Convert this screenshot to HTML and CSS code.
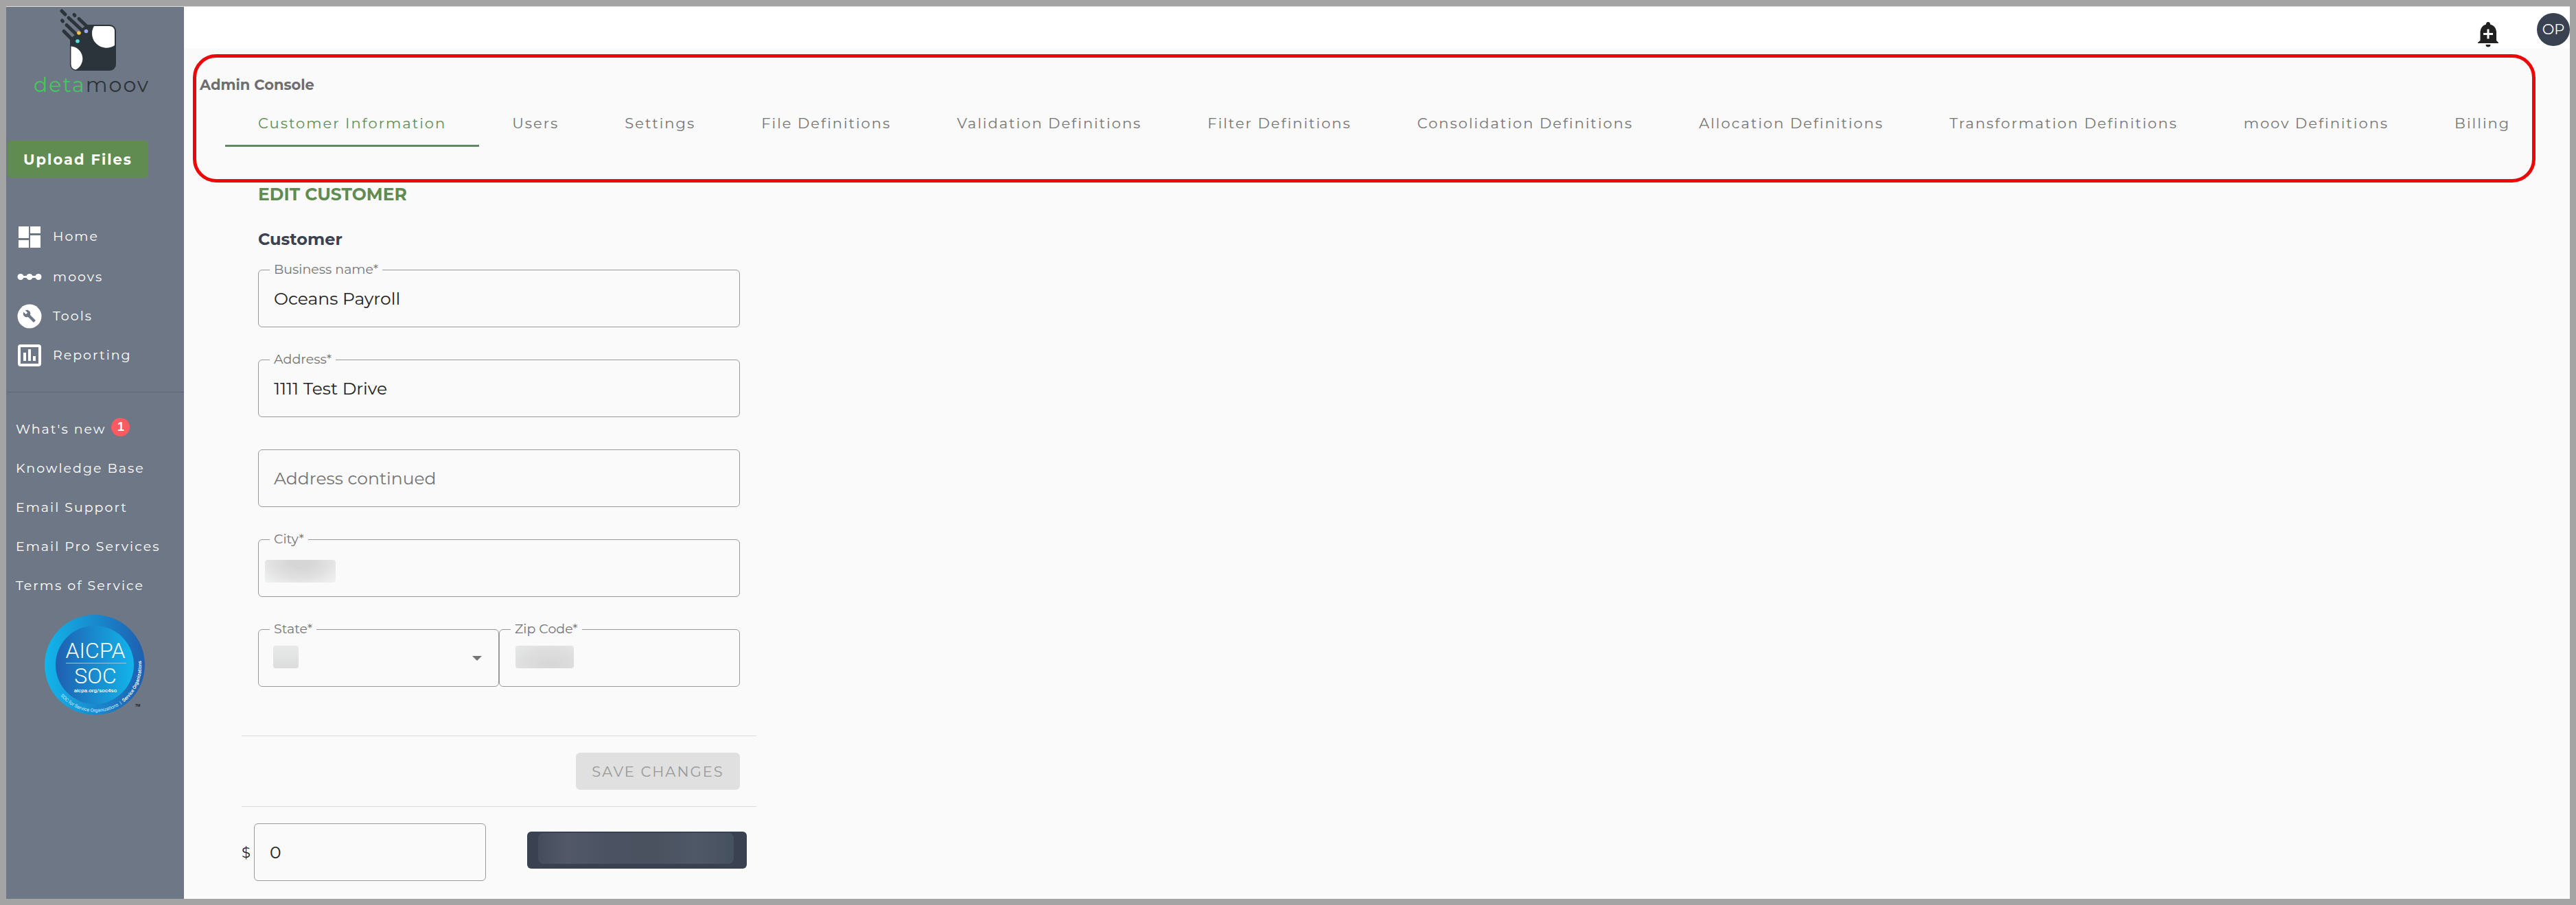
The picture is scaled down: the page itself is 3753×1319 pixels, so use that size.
FILE: index.html
```
<!DOCTYPE html>
<html lang="en">

<head>
    <meta charset="UTF-8">
    <meta name="viewport" content="width=device-width, initial-scale=1.0">
    <title>Admin Console</title>
    <link rel="stylesheet" href="styles.css">
</head>

<body>
    <div class="app">
        <aside class="sidebar">
            <svg class="logo" viewBox="0 0 180 126" width="180" height="126">
                <g stroke="#2c343b" stroke-width="5" stroke-linecap="round">
                    <path d="M44 4l5 5M44.500 18l1 1M62 9.500l1 1M54 14l27 25M69 15.500l18 17M51 24.500l24 23M47 33.500l22 22" />
                </g>
                <path d="M80 24h34a9 9 0 0 1 9 9v49a9 9 0 0 1-9 9H65a9 9 0 0 1-9-9V45z" fill="#2c343b" />
                <path d="M91 26h22q8 0 8 8v20A21 21 0 0 1 91 26z" fill="#fff" />
                <path d="M57.500 55.500a18 18 0 0 1 7 34q-7-1-7-8z" fill="#fff" />
                <circle cx="69" cy="36" r="2.800" fill="#f9c344" />
                <circle cx="79.500" cy="33.500" r="2.800" fill="#9ba6f5" />
                <circle cx="67" cy="48" r="2.800" fill="#4fe3df" />
                <text class="logo-text" x="3" y="122" fill="#41c95c">deta<tspan fill="#2c343b">moov</tspan></text>
            </svg>

            <button class="upload" type="button">Upload Files</button>

            <nav class="menu">
                <a href="#">
                    <svg viewBox="0 0 36 36"><path d="M2 3h15v17H2zM19 3h15v10H19zM2 23h15v11H2zM19 16h15v18H19z" /></svg>
                    Home
                </a>
                <a href="#">
                    <svg viewBox="0 0 36 36"><path d="M5 16h26v3H5z" /><circle cx="5" cy="17.500" r="4.500" /><circle cx="18" cy="17.500" r="4.500" /><circle cx="31" cy="17.500" r="4.500" /></svg>
                    moovs
                </a>
                <a href="#">
                    <svg viewBox="0 0 36 36"><circle cx="18" cy="18" r="17.500" /><path d="M26.500 23.500l-7.500-7.500c.8-2 .3-4.200-1.200-5.700-1.600-1.600-4-2-6-1l3.400 3.400-2.400 2.400-3.500-3.400c-1 2-.6 4.400 1 6 1.500 1.500 3.800 2 5.700 1.200l7.500 7.500c.3.300.8.300 1.100 0l1.900-1.900c.4-.3.400-.8 0-1z" fill="#6e7785" /></svg>
                    Tools
                </a>
                <a href="#">
                    <svg viewBox="0 0 36 36"><rect x="3" y="4" width="30" height="28" rx="2" fill="none" stroke="#fff" stroke-width="4" /><path d="M9 14h4v12H9zM16 9h4v17h-4zM23 19h4v7h-4z" /></svg>
                    Reporting
                </a>
            </nav>

            <nav class="links">
                <a href="#">What's new <span class="badge">1</span></a>
                <a href="#">Knowledge Base</a>
                <a href="#">Email Support</a>
                <a href="#">Email Pro Services</a>
                <a href="#">Terms of Service</a>
            </nav>

            <svg class="seal" viewBox="0 0 150 150" width="150" height="150">
                <defs>
                    <linearGradient id="ring">
                        <stop offset="0" stop-color="#12b5ea" />
                        <stop offset="1" stop-color="#1f5fb0" />
                    </linearGradient>
                    <linearGradient id="disc">
                        <stop offset="0" stop-color="#1f5fb0" />
                        <stop offset="1" stop-color="#12b5ea" />
                    </linearGradient>
                    <path id="curve" d="M24 120a67 67 0 0 0 113-69" />
                </defs>
                <circle cx="74" cy="75" r="73" fill="url(#ring)" />
                <circle cx="74" cy="75" r="57" fill="url(#disc)" />
                <g fill="#fff" text-anchor="middle">
                    <text x="75" y="65" font-size="32" font-weight="300">AICPA</text>
                    <text x="75" y="102" font-size="32" font-weight="300">SOC</text>
                    <text x="75" y="115" font-size="8" font-weight="500">aicpa.org/soc4so</text>
                </g>
                <path d="M32 72.500h88" stroke="#8fc8ee" />
                <text font-size="7" fill="#d5ecfa"><textPath href="#curve">SOC for Service Organizations &#160;| &#160;<tspan fill="#fff" font-weight="500">Service Organizations</tspan></textPath></text>
                <text x="133" y="136" font-size="5" font-weight="700" fill="#222">TM</text>
            </svg>
        </aside>

        <div class="page">
            <header class="topbar">
                <button class="bell" type="button">
                    <svg viewBox="0 0 32 38" width="32" height="38"><path d="M16 1a3 3 0 0 0-3 3.500A12 12 0 0 0 4.500 15v13L1 31v1h30v-1l-3-3V15A12 12 0 0 0 19 4.500 3 3 0 0 0 16 1zM12.500 34a3.500 3.500 0 0 0 7 0z" fill="#212121" /><path d="M16 11.500v14M9 18.500h14" stroke="#fff" stroke-width="3" /></svg>
                </button>
                <span class="avatar">OP</span>
            </header>

            <section class="console">
                <h1>Admin Console</h1>
                <nav class="tabs">
                    <a class="active" href="#">Customer Information</a>
                    <a href="#">Users</a>
                    <a href="#">Settings</a>
                    <a href="#">File Definitions</a>
                    <a href="#">Validation Definitions</a>
                    <a href="#">Filter Definitions</a>
                    <a href="#">Consolidation Definitions</a>
                    <a href="#">Allocation Definitions</a>
                    <a href="#">Transformation Definitions</a>
                    <a href="#">moov Definitions</a>
                    <a href="#">Billing</a>
                </nav>
            </section>

            <main class="content">
                <form class="customer">
                    <h2>EDIT CUSTOMER</h2>
                    <h3>Customer</h3>
                    <div class="field">
                        <input id="business" type="text" value="Oceans Payroll">
                        <label for="business">Business name*</label>
                    </div>
                    <div class="field">
                        <input id="address" type="text" value="1111 Test Drive">
                        <label for="address">Address*</label>
                    </div>
                    <div class="field">
                        <input id="address2" type="text" placeholder="Address continued">
                    </div>
                    <div class="field">
                        <input id="city" type="text">
                        <label for="city">City*</label>
                        <span class="mask mask-city"></span>
                    </div>
                    <div class="row">
                        <div class="field">
                            <select id="state"></select>
                            <label for="state">State*</label>
                            <span class="mask mask-state"></span>
                            <span class="arrow"></span>
                        </div>
                        <div class="field">
                            <input id="zip" type="text">
                            <label for="zip">Zip Code*</label>
                            <span class="mask mask-zip"></span>
                        </div>
                    </div>
                </form>

                <div class="actions">
                    <button class="save" type="button" disabled>SAVE CHANGES</button>
                </div>

                <div class="amount">
                    <label for="amount">$</label>
                    <input id="amount" type="text" value="0">
                    <button class="apply" type="button"><span></span></button>
                </div>
            </main>
        </div>
    </div>
</body>

</html>
```

FILE: styles.css
```
* {
    box-sizing: border-box;
}

body {
    margin: 0;
    background-color: #fafafa;
    font-family: Montserrat, Inter, sans-serif;
    font-size: 21px;
    color: #222;
}

a {
    color: inherit;
    text-decoration: none;
}

button,
input,
select {
    font-family: inherit;
    margin: 0;
}

.app {
    display: flex;
    min-height: 100vh;
    border: 9px solid #a4a4a4;
}

/* sidebar */
.sidebar {
    width: 259px;
    flex-shrink: 0;
    border-top: 1px solid #ddd;
    background-color: #6e7785;
    color: #fff;
    font-size: 19px;
    letter-spacing: 2px;
}

.logo {
    display: block;
    margin: 2px 0 0 37px;
    overflow: visible;
}

.logo-text {
    font-size: 30px;
    letter-spacing: 2px;
}

.upload {
    display: block;
    width: 205px;
    height: 54px;
    margin: 67px 0 0 2px;
    padding: 0;
    border: none;
    border-radius: 5px;
    background-color: #618c51;
    color: #fff;
    font-size: 21px;
    font-weight: 700;
    letter-spacing: 2px;
}

.menu {
    margin-left: 2px;
    padding: 57px 0 25px 14px;
    border-bottom: 1px solid #5d6674;
}

.menu a {
    display: flex;
    align-items: center;
    gap: 16px;
    height: 57px;
}

.menu a:first-child {
    margin-bottom: 2px;
}

.menu svg {
    width: 36px;
    height: 36px;
    fill: #fff;
}

.links {
    padding: 25px 0 0 14px;
}

.links a {
    display: flex;
    align-items: center;
    height: 57px;
    white-space: nowrap;
}

.badge {
    width: 27px;
    height: 27px;
    margin: 0 0 6px 8px;
    border-radius: 50%;
    background-color: #ff5a5f;
    font: bold 18px/27px "Liberation Sans", sans-serif;
    letter-spacing: 0;
    text-align: center;
}

.seal {
    display: block;
    margin: 12px 0 0 55px;
    overflow: visible;
    font-family: Roboto, sans-serif;
    letter-spacing: 0;
}

/* main area */
.page {
    flex: 1;
    min-width: 0;
}

.topbar {
    display: flex;
    justify-content: flex-end;
    gap: 55px;
    height: 61px;
    border-top: 1px solid #ddd;
    background-color: #fff;
}

.bell {
    align-self: center;
    margin-top: 22px;
    padding: 0;
    border: none;
    background: none;
}

.avatar {
    width: 48px;
    height: 48px;
    margin-top: 9px;
    border-radius: 50%;
    background-color: #3a4252;
    color: #fff;
    line-height: 48px;
    text-align: center;
}

.console {
    height: 187px;
    margin: 9px 50px 0 13px;
    padding: 27px 0 0 5px;
    border: 5px solid #ea0808;
    border-radius: 34px;
}

h1,
h2,
h3 {
    margin: 0;
    font-weight: 700;
}

h1 {
    font-size: 21px;
    line-height: 26px;
    color: #6e6e6e;
}

.tabs {
    display: flex;
    margin-left: 37px;
    color: #757575;
    letter-spacing: 2px;
}

.tabs a {
    height: 77px;
    padding: 0 48px;
    line-height: 85px;
    white-space: nowrap;
}

.tabs .active {
    border-bottom: 3px solid #618c51;
    color: #618c51;
}

.content {
    width: 750px;
    margin-left: 84px;
}

.customer {
    padding: 0 24px 71px;
}

h2 {
    font-size: 25px;
    line-height: 34px;
    color: #618c51;
}

h3 {
    margin: 32px 0 27px;
    font-size: 24px;
    line-height: 34px;
    color: #3a4252;
}

.field {
    position: relative;
    flex: 1;
    margin-bottom: 47px;
}

.row {
    display: flex;
}

.row .field {
    margin-bottom: 0;
}

.field input,
.field select,
.amount input {
    display: block;
    width: 100%;
    height: 84px;
    padding: 0 22px;
    border: 1px solid #999;
    border-radius: 6px;
    background: none;
    color: #222;
    font-size: 25px;
    appearance: none;
}

input::placeholder {
    color: #757575;
    opacity: 1;
}

.field label {
    position: absolute;
    top: -12px;
    left: 17px;
    padding: 0 6px;
    background-color: #fafafa;
    color: #757575;
    font-size: 19px;
    line-height: 24px;
}

.arrow {
    position: absolute;
    top: 39px;
    right: 25px;
    border: 7px solid transparent;
    border-top-color: #757575;
    border-bottom: none;
}

/* hidden values */
.mask {
    position: absolute;
    height: 33px;
    border-radius: 4px;
}

.mask-city {
    top: 30px;
    left: 10px;
    width: 103px;
    background: radial-gradient(ellipse at 50% 10%, #d6d6d6 20%, #e2e2e2 60%, #f1f3f2);
}

.mask-state {
    top: 24px;
    left: 22px;
    width: 37px;
    background: linear-gradient(#e8eaea, #dcdcdc);
}

.mask-zip {
    top: 24px;
    left: 24px;
    width: 85px;
    background: radial-gradient(ellipse at 60% 80%, #d6d6d6, #dfdfdf 60%, #e7e9e9);
}

.actions {
    display: flex;
    justify-content: flex-end;
    padding: 24px;
    border-top: 1px solid #dcdcdc;
    border-bottom: 1px solid #dcdcdc;
}

.save {
    width: 239px;
    height: 54px;
    padding: 0;
    border: none;
    border-radius: 6px;
    background-color: #e0e0e0;
    color: #999;
    font-size: 21px;
    letter-spacing: 2px;
}

.amount {
    display: flex;
    align-items: center;
    padding-top: 24px;
}

.amount label {
    width: 18px;
}

.amount input {
    width: 338px;
}

.apply {
    width: 320px;
    height: 54px;
    margin: 0 0 6px 60px;
    padding: 2px 19px 7px 16px;
    border: none;
    border-radius: 6px;
    background-color: #3a4252;
}

.apply span {
    display: block;
    height: 45px;
    border-radius: 8px;
    background: linear-gradient(90deg, #454d5c, #525868 15%, #4b5362 35%, #4a5260 60%, #4f5866 80%, #465160);
}
```
